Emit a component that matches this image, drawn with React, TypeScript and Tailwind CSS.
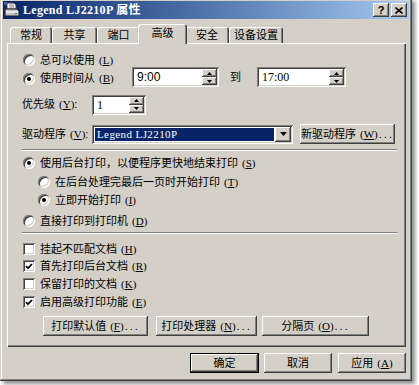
import type { ReactNode } from "react";

const raised =
  "shadow-[inset_-1px_-1px_#404040,inset_1px_1px_#ffffff,inset_-2px_-2px_#808080,inset_2px_2px_#d4d0c8]";
const sunken =
  "shadow-[inset_1px_1px_#808080,inset_-1px_-1px_#ffffff,inset_2px_2px_#404040,inset_-2px_-2px_#d4d0c8]";

function Key({ k }: { k: string }) {
  return (
    <span className="ml-[4px] font-['Liberation_Serif',serif] text-[11px]">
      (<span className="underline underline-offset-1">{k}</span>)
    </span>
  );
}

function Radio({ on }: { on?: boolean }) {
  return (
    <span className={`flex items-center justify-center w-[12px] h-[12px] rounded-full bg-white shrink-0 ${sunken}`}>
      {on && <span className="w-[4px] h-[4px] rounded-full bg-black" />}
    </span>
  );
}

function Check({ on }: { on?: boolean }) {
  return (
    <span className={`flex items-center justify-center w-[12px] h-[12px] bg-white shrink-0 ${sunken}`}>
      {on && (
        <svg width="8" height="7" viewBox="0 0 8 7">
          <polyline points="1,3 3,5.2 7,1" fill="none" stroke="#000" strokeWidth="1.7" />
        </svg>
      )}
    </span>
  );
}

function Arrow({ up }: { up?: boolean }) {
  return (
    <svg width="5" height="3" viewBox="0 0 5 3">
      <polygon points={up ? "2.5,0 5,3 0,3" : "0,0 5,0 2.5,3"} fill="#000" />
    </svg>
  );
}

function Spin({ value, w, serif }: { value: string; w: string; serif?: boolean }) {
  return (
    <div className={`flex h-[20px] bg-white p-[2px] ${sunken} ${w}`}>
      <div
        className={`flex-1 flex items-center pl-[3px] text-[12px] ${
          serif ? "font-['Liberation_Serif',serif]" : "font-['Liberation_Sans',sans-serif]"
        }`}
      >
        {value}
      </div>
      <div className="flex flex-col w-[15px]">
        <div className={`flex-1 flex items-center justify-center bg-[#d4d0c8] ${raised}`}>
          <Arrow up />
        </div>
        <div className={`flex-1 flex items-center justify-center bg-[#d4d0c8] ${raised}`}>
          <Arrow />
        </div>
      </div>
    </div>
  );
}

function Btn({ children, w, def }: { children: ReactNode; w: string; def?: boolean }) {
  return (
    <div
      className={`flex items-center justify-center h-[20px] bg-[#d4d0c8] ${w} ${
        def
          ? "shadow-[inset_0_0_0_1px_#000000,inset_-2px_-2px_#404040,inset_2px_2px_#ffffff,inset_-3px_-3px_#808080]"
          : raised
      }`}
    >
      {children}
    </div>
  );
}

function Tab({ label, w, on }: { label: string; w: string; on?: boolean }) {
  return (
    <div
      className={`flex items-center justify-center rounded-t-[3px] bg-[#d4d0c8] shadow-[inset_1px_1px_#ffffff,inset_-1px_0_#404040,inset_-2px_0_#808080] ${w} ${
        on ? "h-[20px] -mb-[1px] -mx-[2px] px-[2px] relative z-10 pb-[2px]" : "h-[16px]"
      }`}
    >
      {label}
    </div>
  );
}

function Sep() {
  return <div className="h-[2px] w-[375px] -ml-[1px] border-t border-[#808080] border-b border-b-white" />;
}

function PrinterIcon() {
  return (
    <svg width="16" height="16" viewBox="0 0 16 16">
      <polygon points="3,1 10,1 12,3 12,7 3,7" fill="#ffffff" stroke="#404040" strokeWidth="1" />
      <line x1="5" y1="3" x2="10" y2="3" stroke="#808080" />
      <line x1="5" y1="5" x2="10" y2="5" stroke="#808080" />
      <polygon points="1,7 13,7 15,9 15,14 1,14" fill="#c0c0c0" stroke="#202020" strokeWidth="1" />
      <rect x="2" y="9" width="12" height="2" fill="#e8e8e8" />
      <rect x="11" y="11" width="2" height="1" fill="#2a8f2a" />
      <rect x="0" y="0" width="3" height="3" fill="#3a5a9a" />
    </svg>
  );
}

export default function App() {
  return (
    <div className="w-[419px] h-[385px] bg-white overflow-hidden font-['Liberation_Sans','Noto_Sans_CJK_SC',sans-serif] text-[11px] text-black leading-none">
      <div className="-mt-[2px] w-[412px] h-[383px] bg-[#d4d0c8] p-[3px] flex flex-col shadow-[inset_-1px_-1px_#404040,inset_1px_1px_#d4d0c8,inset_-2px_-2px_#808080,inset_2px_2px_#ffffff,3px_3px_4px_rgba(0,0,0,0.45)]">
        {/* title bar */}
        <div className="h-[18px] flex items-center bg-gradient-to-r from-[#0a246a] to-[#a6caf0] pr-[2px]">
          <div className="ml-[1px]">
            <PrinterIcon />
          </div>
          <div className="ml-[3px] text-white font-bold text-[12px] font-['Liberation_Serif','Noto_Sans_CJK_SC',serif] tracking-[0.3px]">
            Legend LJ2210P 属性
          </div>
          <div className="ml-auto flex gap-[2px]">
            <div className={`w-[16px] h-[14px] flex items-center justify-center bg-[#d4d0c8] font-bold text-[11px] ${raised}`}>
              ?
            </div>
            <div className={`w-[16px] h-[14px] flex items-center justify-center bg-[#d4d0c8] ${raised}`}>
              <svg width="8" height="7" viewBox="0 0 8 7">
                <path d="M0.5 0.5 L7.5 6.5 M7.5 0.5 L0.5 6.5" stroke="#000" strokeWidth="1.6" />
              </svg>
            </div>
          </div>
        </div>

        <div className="pl-[4px] pr-[3px] flex flex-col">
          {/* tabs */}
          <div className="mt-[5px] h-[19px] flex items-end pl-[3px]">
            <Tab label="常规" w="w-[42px]" />
            <Tab label="共享" w="w-[45px]" />
            <Tab label="端口" w="w-[43px]" />
            <Tab label="高级" w="w-[49px]" on />
            <Tab label="安全" w="w-[44px]" />
            <Tab label="设备设置" w="w-[54px]" />
          </div>

          {/* panel */}
          <div className="h-[304px] pl-[16px] pt-[1px] flex flex-col shadow-[inset_1px_1px_#ffffff,inset_-1px_-1px_#404040,inset_-2px_-2px_#808080]">
            <div className="mt-[9px] h-[14px] flex items-center">
              <Radio />
              <span className="ml-[5px]">总可以使用</span>
              <Key k="L" />
            </div>

            <div className="h-[20px] flex items-center">
              <div className="w-[109px] flex items-center pt-[3px]">
                <Radio on />
                <span className="ml-[5px]">使用时间从</span>
                <Key k="B" />
              </div>
              <Spin value="9:00" w="w-[87px]" />
              <span className="ml-[11px] w-[16px]">到</span>
              <div className="ml-[11px]">
                <Spin value="17:00" w="w-[89px]" serif />
              </div>
            </div>

            <div className="mt-[8px] h-[19px] flex items-center">
              <div className="w-[70px] -ml-[1px] pr-[1px]">
                优先级
                <Key k="Y" />:
              </div>
              <Spin value="1" w="w-[54px]" serif />
            </div>

            <div className="mt-[10px] h-[20px] flex items-center">
              <div className="w-[70px] -ml-[1px] pr-[1px]">
                驱动程序
                <Key k="V" />:
              </div>
              <div className={`w-[201px] h-[19px] bg-white p-[2px] flex ${sunken}`}>
                <div className="flex-1 m-[1px] bg-[#0a246a] text-white flex items-center pl-[2px] font-['Liberation_Serif',serif] text-[11px] tracking-[0.4px]">
                  Legend LJ2210P
                </div>
                <div className={`w-[16px] flex items-center justify-center bg-[#d4d0c8] ${raised}`}>
                  <svg width="7" height="4" viewBox="0 0 7 4">
                    <polygon points="0,0 7,0 3.5,4" fill="#000" />
                  </svg>
                </div>
              </div>
              <div className="ml-[7px]">
                <Btn w="w-[95px]">
                  新驱动程序
                  <Key k="W" />
                  <span className="tracking-[2px] ml-[1px]">...</span>
                </Btn>
              </div>
            </div>

            <div className="mt-[5px]">
              <Sep />
            </div>

            <div className="mt-[5px] h-[14px] flex items-center">
              <Radio on />
              <span className="ml-[5px]">使用后台打印，以便程序更快地结束打印</span>
              <Key k="S" />
            </div>
            <div className="mt-[5px] h-[14px] flex items-center pl-[15px]">
              <Radio />
              <span className="ml-[5px]">在后台处理完最后一页时开始打印</span>
              <Key k="T" />
            </div>
            <div className="mt-[4px] h-[14px] flex items-center pl-[15px]">
              <Radio on />
              <span className="ml-[5px]">立即开始打印</span>
              <Key k="I" />
            </div>
            <div className="mt-[7px] h-[14px] flex items-center">
              <Radio />
              <span className="ml-[5px]">直接打印到打印机</span>
              <Key k="D" />
            </div>

            <div className="mt-[4px]">
              <Sep />
            </div>

            <div className="mt-[8px] h-[14px] flex items-center">
              <Check />
              <span className="ml-[5px]">挂起不匹配文档</span>
              <Key k="H" />
            </div>
            <div className="mt-[3px] h-[14px] flex items-center">
              <Check on />
              <span className="ml-[5px]">首先打印后台文档</span>
              <Key k="R" />
            </div>
            <div className="mt-[4px] h-[14px] flex items-center">
              <Check />
              <span className="ml-[5px]">保留打印的文档</span>
              <Key k="K" />
            </div>
            <div className="mt-[4px] h-[14px] flex items-center">
              <Check on />
              <span className="ml-[5px]">启用高级打印功能</span>
              <Key k="E" />
            </div>

            <div className="mt-[7px] flex pl-[20px]">
              <Btn w="w-[105px]">
                打印默认值
                <Key k="F" />
                <span className="tracking-[2px] ml-[1px]">...</span>
              </Btn>
              <div className="ml-[8px]">
                <Btn w="w-[101px]">
                  打印处理器
                  <Key k="N" />
                  <span className="tracking-[2px] ml-[1px]">...</span>
                </Btn>
              </div>
              <div className="ml-[5px]">
                <Btn w="w-[107px]">
                  分隔页
                  <Key k="O" />
                  <span className="tracking-[2px] ml-[1px]">...</span>
                </Btn>
              </div>
            </div>
          </div>

          {/* bottom buttons */}
          <div className="mt-[6px] flex justify-end">
            <Btn w="w-[69px]" def>
              确定
            </Btn>
            <div className="ml-[5px]">
              <Btn w="w-[68px]">取消</Btn>
            </div>
            <div className="ml-[6px]">
              <Btn w="w-[68px]">
                应用
                <Key k="A" />
              </Btn>
            </div>
          </div>
        </div>
      </div>
    </div>
  );
}
